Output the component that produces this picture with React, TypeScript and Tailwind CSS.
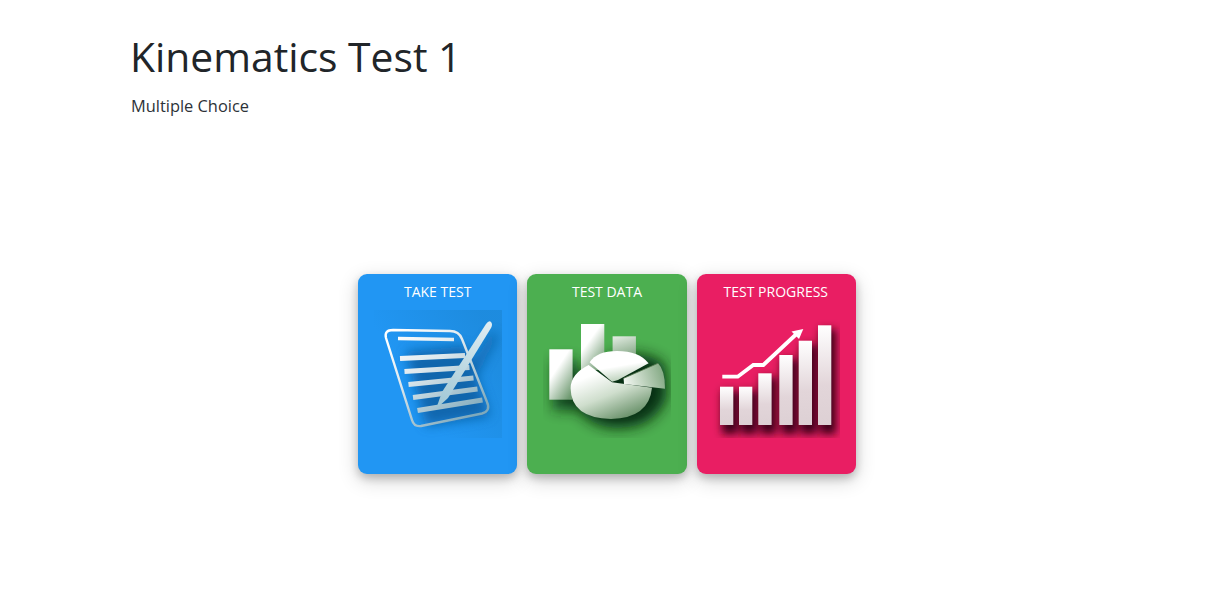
import React from "react";

const FONT = "font-['Open_Sans','Noto_Sans',sans-serif]";

const NotesIcon = () => (
  <svg width="128" height="128" viewBox="0 0 128 128" className="block">
    <defs>
      <clipPath id="n-clip"><rect width="128" height="128" /></clipPath>
      <filter id="n-blur" x="-30%" y="-30%" width="160%" height="160%"><feGaussianBlur stdDeviation="6" /></filter>
      <linearGradient id="n-tint" x1="0.35" y1="0.7" x2="1" y2="0.3">
        <stop offset="0" stopColor="#1c87d6" stopOpacity="0" />
        <stop offset="1" stopColor="#1c87d6" stopOpacity="0.7" />
      </linearGradient>
      <linearGradient id="n-line" gradientUnits="userSpaceOnUse" x1="24" y1="20" x2="90" y2="112">
        <stop offset="0" stopColor="#ffffff" />
        <stop offset="0.4" stopColor="#dfe9ee" />
        <stop offset="1" stopColor="#7fa9bb" />
      </linearGradient>
      <linearGradient id="n-pen" gradientUnits="userSpaceOnUse" x1="116" y1="13" x2="62" y2="99">
        <stop offset="0" stopColor="#e0edf2" />
        <stop offset="1" stopColor="#9ec6d4" />
      </linearGradient>
    </defs>
    <g clipPath="url(#n-clip)">
      <rect width="128" height="128" fill="url(#n-tint)" />
      <g filter="url(#n-blur)" fill="#0d5c9e" opacity="0.8">
        <path d="M32 42 L92 36 L116 106 L52 116 Z" />
        <path d="M72 96 L118 22 L124 26 L84 100 Z" />
      </g>
      <path
        d="M19 20 L76 21 Q85 21 88 29 L113 92 Q117 101 108 103.5 L47 116 Q40 117 38 110 L12 28 Q10 20 19 20 Z"
        fill="none"
        stroke="url(#n-line)"
        strokeWidth="2.4"
      />
      <g stroke="url(#n-line)" fill="none">
        <path d="M24 28.5 L80 29.5" strokeWidth="3.6" />
        <path d="M26 48.5 L91 45.5" strokeWidth="5.2" />
        <path d="M30.5 61.5 L95.5 57.5" strokeWidth="5.2" />
        <path d="M34.5 74.5 L99.5 68" strokeWidth="5.2" />
        <path d="M39 87.5 L103.5 79" strokeWidth="5.2" />
        <path d="M43.5 100.5 L108.5 90" strokeWidth="5.2" />
      </g>
      <path
        d="M62 99 L68 82 L112 14 Q115 10 117 12 Q119 14 117 18 L74 88 Z"
        fill="url(#n-pen)"
      />
    </g>
  </svg>
);

const ChartsIcon = () => (
  <svg width="128" height="128" viewBox="0 0 128 128" className="block">
    <defs>
      <clipPath id="c-clip"><rect width="128" height="128" /></clipPath>
      <filter id="c-blur" x="-30%" y="-30%" width="160%" height="160%"><feGaussianBlur stdDeviation="7" /></filter>
      <linearGradient id="c-bar" x1="0.2" y1="0.15" x2="0.8" y2="1">
        <stop offset="0.25" stopColor="#ffffff" />
        <stop offset="1" stopColor="#6f9a71" />
      </linearGradient>
      <linearGradient id="c-bar3" x1="0.3" y1="0" x2="0.6" y2="1">
        <stop offset="0" stopColor="#dde8dd" />
        <stop offset="1" stopColor="#7ba17c" />
      </linearGradient>
      <linearGradient id="c-pie" x1="0.2" y1="0.1" x2="0.75" y2="1">
        <stop offset="0.1" stopColor="#ffffff" />
        <stop offset="0.5" stopColor="#cfdecd" />
        <stop offset="1" stopColor="#5f8a60" />
      </linearGradient>
      <linearGradient id="c-top" x1="0.3" y1="0.1" x2="0.6" y2="1">
        <stop offset="0.45" stopColor="#ffffff" />
        <stop offset="1" stopColor="#b5ccb4" />
      </linearGradient>
      <linearGradient id="c-right" x1="0" y1="0.6" x2="1" y2="0.4">
        <stop offset="0" stopColor="#f1f6f0" />
        <stop offset="1" stopColor="#82a882" />
      </linearGradient>
    </defs>
    <g clipPath="url(#c-clip)">
      <g filter="url(#c-blur)" fill="#01240a" opacity="0.9">
        <rect x="10" y="50" width="24" height="50" opacity="0.85" />
        <path d="M28 86 Q36 54 78 44 Q110 42 122 56 L124 86 Q112 120 70 118 Q38 114 28 86 Z" />
      </g>
      <rect x="6.3" y="39.3" width="23.3" height="50.4" fill="url(#c-bar)" />
      <rect x="38" y="14" width="23.3" height="46" fill="url(#c-bar)" />
      <rect x="69.6" y="26.3" width="23.3" height="24" fill="url(#c-bar3)" />
      <path
        d="M45.6 55 Q27.6 64 27.6 78.3 Q28 108 68 109 Q106 108 109 77.7 L69 72.3 Z"
        fill="url(#c-pie)"
      />
      <path
        d="M46.6 52.3 Q54 41 74 41 Q96 41 105.6 53.3 L75 70 L69 71.7 Z"
        fill="url(#c-top)"
      />
      <path
        d="M80.6 68.3 L115 53.3 Q122 60 122 78.7 L81 74 Z"
        fill="url(#c-right)"
      />
      <path d="M80.6 68.3 L115 53.3" stroke="#55784f" strokeWidth="0.8" />
    </g>
  </svg>
);

const BARS = [
  { x: 8, y: 76.7 },
  { x: 27, y: 76.7 },
  { x: 46.3, y: 63.3 },
  { x: 67.3, y: 45 },
  { x: 86.7, y: 30.7 },
  { x: 106, y: 15.3 },
];

const GrowthIcon = () => (
  <svg width="128" height="128" viewBox="0 0 128 128" className="block">
    <defs>
      <clipPath id="g-clip"><rect width="128" height="128" /></clipPath>
      <filter id="g-blur" x="-30%" y="-30%" width="160%" height="160%"><feGaussianBlur stdDeviation="4" /></filter>
      <linearGradient id="g-bar" x1="0" y1="0" x2="0" y2="1">
        <stop offset="0" stopColor="#ffffff" />
        <stop offset="0.6" stopColor="#e2d5d9" />
        <stop offset="1" stopColor="#ddd0d4" />
      </linearGradient>
    </defs>
    <g clipPath="url(#g-clip)">
      <g filter="url(#g-blur)" fill="#3a0418">
        {BARS.map((b) => (
          <rect key={b.x} x={b.x + 2} y={b.y + 4} width="16" height={120 - b.y} />
        ))}
      </g>
      {BARS.map((b) => (
        <rect key={b.x} x={b.x} y={b.y} width="13.3" height={115 - b.y} fill="url(#g-bar)" />
      ))}
      <path
        d="M10.3 66.7 L25.7 66.7 L41.3 55 L51.3 55 L85 23.5"
        fill="none"
        stroke="#ffffff"
        strokeWidth="3.8"
      />
      <path d="M91.3 19 L79.5 21.5 L87 29 Z" fill="#ffffff" />
    </g>
  </svg>
);

const CARDS = [
  { title: "Take Test", bg: "bg-[#2196f3]", pad: "pl-[16px]", icon: <NotesIcon /> },
  { title: "Test Data", bg: "bg-[#4caf50]", pad: "pl-[16px]", icon: <ChartsIcon /> },
  { title: "Test Progress", bg: "bg-[#e91e63]", pad: "pl-[15px]", icon: <GrowthIcon /> },
];

export default function App() {
  return (
    <div className={`h-[600px] w-[1232px] overflow-hidden bg-white text-[#212529] ${FONT}`}>
      <header className="pl-[130px] pt-[28px]">
        <h1 className="text-[40.8px] leading-[56px] font-normal">Kinematics Test 1</h1>
        <p className="mt-[10px] pl-[1px] text-[16.4px] leading-[24px] font-normal text-[#2d3238]">Multiple Choice</p>
      </header>
      <div className="mt-[156px] flex gap-[10px] pl-[358px]">
        {CARDS.map((card) => (
          <div
            key={card.title}
            className={`h-[200px] w-[159.33px] rounded-[9px] pt-[8px] text-white shadow-[0_4px_8px_rgba(0,0,0,0.2),0_6px_20px_rgba(0,0,0,0.19)] ${card.bg} ${card.pad}`}
          >
            <div className="-ml-[16px] text-center text-[14px] leading-[20px] uppercase">{card.title}</div>
            <div className="mt-[8px]">{card.icon}</div>
          </div>
        ))}
      </div>
    </div>
  );
}
